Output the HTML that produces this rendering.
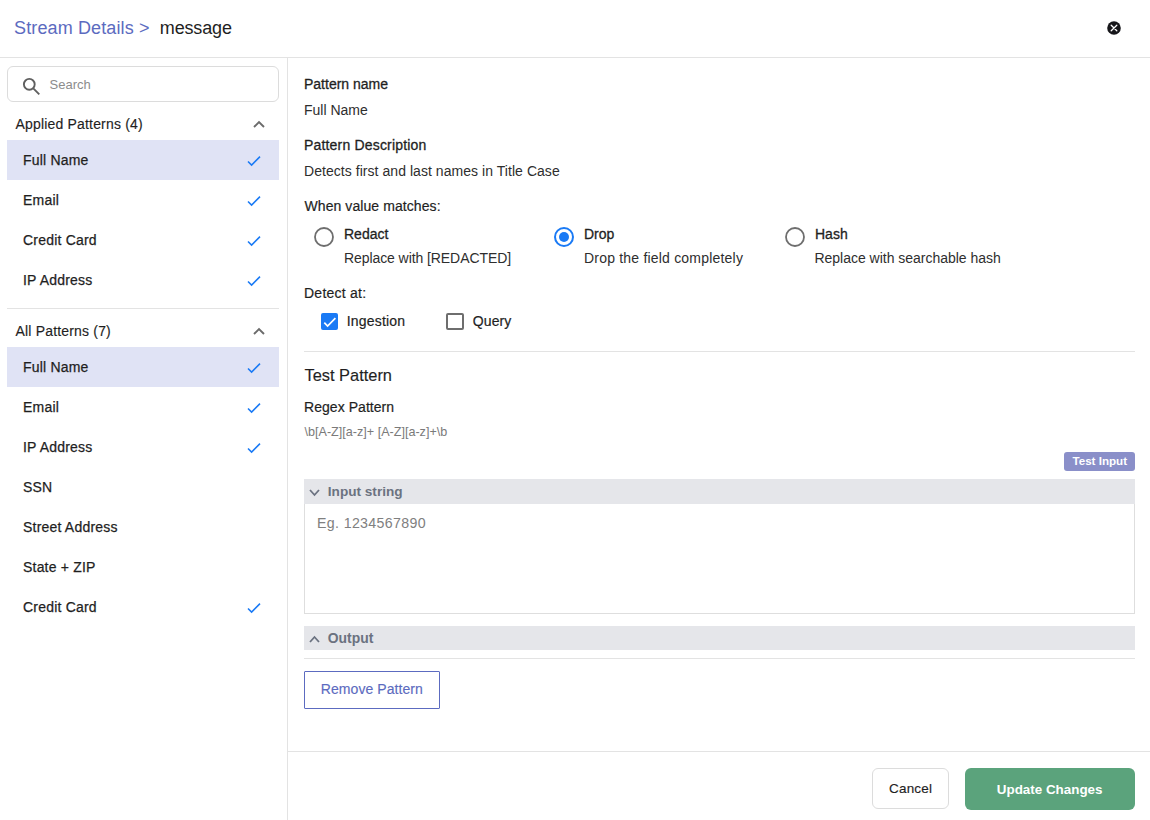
<!DOCTYPE html>
<html><head><meta charset="utf-8"><style>
html,body{margin:0;padding:0;background:#fff;width:1150px;height:820px;overflow:hidden;position:relative;font-family:"Liberation Sans", sans-serif;}
.t{position:absolute;white-space:pre;}
</style></head><body>
<div class="t" id="t0" style="left:14.00px;top:18.56px;font-size:18px;line-height:18px;font-weight:400;color:#5c6bc0;letter-spacing:0.13px;">Stream Details &gt;</div>
<div class="t" id="t1" style="left:159.80px;top:18.56px;font-size:18px;line-height:18px;font-weight:400;color:#1f1f1f;letter-spacing:-0.15px;">message</div>
<svg style="position:absolute;left:1106px;top:20px" width="16" height="16" viewBox="0 0 16 16"><circle cx="8" cy="8" r="6.8" fill="#16161a"/><path d="M5.2 5.2 L10.8 10.8 M10.8 5.2 L5.2 10.8" stroke="#fff" stroke-width="1.3" stroke-linecap="round"/></svg>
<div style="position:absolute;left:0px;top:57px;width:1150px;height:1px;background:#e3e3e3"></div>
<div style="position:absolute;left:287px;top:58px;width:1px;height:762px;background:#e3e3e3"></div>
<div style="position:absolute;left:288px;top:751px;width:862px;height:1px;background:#e3e3e3"></div>
<div style="position:absolute;left:7px;top:66px;width:272px;height:36px;box-sizing:border-box;border:1px solid #dcdcdc;border-radius:6px"></div>
<svg style="position:absolute;left:20px;top:75px" width="24" height="24" viewBox="0 0 24 24"><circle cx="9.3" cy="9.3" r="5.4" fill="none" stroke="#5f5f5f" stroke-width="1.9"/><path d="M13.3 13.3 L19.3 19.3" stroke="#5f5f5f" stroke-width="1.9" stroke-linecap="butt"/></svg>
<div class="t" id="t2" style="left:49.50px;top:77.89px;font-size:13px;line-height:13px;font-weight:400;color:#8c8c8c;">Search</div>
<div class="t" id="t3" style="left:15.50px;top:117.35px;font-size:14px;line-height:14px;font-weight:400;color:#1f1f1f;letter-spacing:0.18px;-webkit-text-stroke:0.15px #1f1f1f;">Applied Patterns (4)</div>
<svg style="position:absolute;left:252.0px;top:120.2px" width="14" height="9" viewBox="0 0 14 9"><path d="M2 7 L7.0 2 L12 7" fill="none" stroke="#6b6b6b" stroke-width="1.9"/></svg>
<div style="position:absolute;left:7px;top:140px;width:272px;height:40px;background:#e0e3f5"></div>
<div class="t" id="t4" style="left:23.00px;top:152.95px;font-size:14px;line-height:14px;font-weight:400;color:#1f1f1f;letter-spacing:0.2px;-webkit-text-stroke:0.25px #1f1f1f;">Full Name</div>
<svg style="position:absolute;left:247px;top:155px" width="14" height="12" viewBox="0 0 14 12"><path d="M1 6.5 L4.6 10.1 L13 1.6" fill="none" stroke="#1a7af5" stroke-width="1.55"/></svg>
<div class="t" id="t5" style="left:23.00px;top:192.95px;font-size:14px;line-height:14px;font-weight:400;color:#1f1f1f;letter-spacing:0.2px;-webkit-text-stroke:0.25px #1f1f1f;">Email</div>
<svg style="position:absolute;left:247px;top:195px" width="14" height="12" viewBox="0 0 14 12"><path d="M1 6.5 L4.6 10.1 L13 1.6" fill="none" stroke="#1a7af5" stroke-width="1.55"/></svg>
<div class="t" id="t6" style="left:23.00px;top:232.95px;font-size:14px;line-height:14px;font-weight:400;color:#1f1f1f;letter-spacing:0.2px;-webkit-text-stroke:0.25px #1f1f1f;">Credit Card</div>
<svg style="position:absolute;left:247px;top:235px" width="14" height="12" viewBox="0 0 14 12"><path d="M1 6.5 L4.6 10.1 L13 1.6" fill="none" stroke="#1a7af5" stroke-width="1.55"/></svg>
<div class="t" id="t7" style="left:23.00px;top:272.95px;font-size:14px;line-height:14px;font-weight:400;color:#1f1f1f;letter-spacing:0.2px;-webkit-text-stroke:0.25px #1f1f1f;">IP Address</div>
<svg style="position:absolute;left:247px;top:275px" width="14" height="12" viewBox="0 0 14 12"><path d="M1 6.5 L4.6 10.1 L13 1.6" fill="none" stroke="#1a7af5" stroke-width="1.55"/></svg>
<div style="position:absolute;left:7px;top:308px;width:272px;height:1px;background:#e3e3e3"></div>
<div class="t" id="t8" style="left:15.50px;top:324.05px;font-size:14px;line-height:14px;font-weight:400;color:#1f1f1f;letter-spacing:0.18px;-webkit-text-stroke:0.15px #1f1f1f;">All Patterns (7)</div>
<svg style="position:absolute;left:252.0px;top:327.2px" width="14" height="9" viewBox="0 0 14 9"><path d="M2 7 L7.0 2 L12 7" fill="none" stroke="#6b6b6b" stroke-width="1.9"/></svg>
<div style="position:absolute;left:7px;top:347px;width:272px;height:40px;background:#e0e3f5"></div>
<div class="t" id="t9" style="left:23.00px;top:359.95px;font-size:14px;line-height:14px;font-weight:400;color:#1f1f1f;letter-spacing:0.2px;-webkit-text-stroke:0.25px #1f1f1f;">Full Name</div>
<svg style="position:absolute;left:247px;top:362px" width="14" height="12" viewBox="0 0 14 12"><path d="M1 6.5 L4.6 10.1 L13 1.6" fill="none" stroke="#1a7af5" stroke-width="1.55"/></svg>
<div class="t" id="t10" style="left:23.00px;top:399.95px;font-size:14px;line-height:14px;font-weight:400;color:#1f1f1f;letter-spacing:0.2px;-webkit-text-stroke:0.25px #1f1f1f;">Email</div>
<svg style="position:absolute;left:247px;top:402px" width="14" height="12" viewBox="0 0 14 12"><path d="M1 6.5 L4.6 10.1 L13 1.6" fill="none" stroke="#1a7af5" stroke-width="1.55"/></svg>
<div class="t" id="t11" style="left:23.00px;top:439.95px;font-size:14px;line-height:14px;font-weight:400;color:#1f1f1f;letter-spacing:0.2px;-webkit-text-stroke:0.25px #1f1f1f;">IP Address</div>
<svg style="position:absolute;left:247px;top:442px" width="14" height="12" viewBox="0 0 14 12"><path d="M1 6.5 L4.6 10.1 L13 1.6" fill="none" stroke="#1a7af5" stroke-width="1.55"/></svg>
<div class="t" id="t12" style="left:23.00px;top:479.95px;font-size:14px;line-height:14px;font-weight:400;color:#1f1f1f;letter-spacing:0.2px;-webkit-text-stroke:0.25px #1f1f1f;">SSN</div>
<div class="t" id="t13" style="left:23.00px;top:519.95px;font-size:14px;line-height:14px;font-weight:400;color:#1f1f1f;letter-spacing:0.2px;-webkit-text-stroke:0.25px #1f1f1f;">Street Address</div>
<div class="t" id="t14" style="left:23.00px;top:559.95px;font-size:14px;line-height:14px;font-weight:400;color:#1f1f1f;letter-spacing:0.2px;-webkit-text-stroke:0.25px #1f1f1f;">State + ZIP</div>
<div class="t" id="t15" style="left:23.00px;top:599.95px;font-size:14px;line-height:14px;font-weight:400;color:#1f1f1f;letter-spacing:0.2px;-webkit-text-stroke:0.25px #1f1f1f;">Credit Card</div>
<svg style="position:absolute;left:247px;top:602px" width="14" height="12" viewBox="0 0 14 12"><path d="M1 6.5 L4.6 10.1 L13 1.6" fill="none" stroke="#1a7af5" stroke-width="1.55"/></svg>
<div class="t" id="t16" style="left:304.00px;top:77.15px;font-size:14px;line-height:14px;font-weight:400;color:#1f1f1f;-webkit-text-stroke:0.3px #1f1f1f;">Pattern name</div>
<div class="t" id="t17" style="left:304.00px;top:102.85px;font-size:14px;line-height:14px;font-weight:400;color:#2e2e2e;">Full Name</div>
<div class="t" id="t18" style="left:304.00px;top:138.25px;font-size:14px;line-height:14px;font-weight:400;color:#1f1f1f;letter-spacing:0.18px;-webkit-text-stroke:0.3px #1f1f1f;">Pattern Description</div>
<div class="t" id="t19" style="left:304.00px;top:164.15px;font-size:14px;line-height:14px;font-weight:400;color:#2e2e2e;letter-spacing:0.05px;">Detects first and last names in Title Case</div>
<div class="t" id="t20" style="left:304.50px;top:199.25px;font-size:14px;line-height:14px;font-weight:400;color:#1f1f1f;letter-spacing:0.08px;-webkit-text-stroke:0.2px #1f1f1f;">When value matches:</div>
<svg style="position:absolute;left:313px;top:226px" width="22" height="22" viewBox="0 0 22 22"><circle cx="11" cy="11" r="9" fill="none" stroke="#6e6e6e" stroke-width="1.8"/></svg>
<div class="t" id="t21" style="left:344.00px;top:227.45px;font-size:14px;line-height:14px;font-weight:400;color:#1f1f1f;-webkit-text-stroke:0.3px #1f1f1f;">Redact</div>
<div class="t" id="t22" style="left:344.00px;top:250.95px;font-size:14px;line-height:14px;font-weight:400;color:#2e2e2e;letter-spacing:-0.08px;">Replace with [REDACTED]</div>
<svg style="position:absolute;left:553px;top:226px" width="22" height="22" viewBox="0 0 22 22"><circle cx="11" cy="11" r="9" fill="none" stroke="#1a7af5" stroke-width="2"/><circle cx="11" cy="11" r="5" fill="#1a7af5"/></svg>
<div class="t" id="t23" style="left:584.00px;top:227.45px;font-size:14px;line-height:14px;font-weight:400;color:#1f1f1f;-webkit-text-stroke:0.3px #1f1f1f;">Drop</div>
<div class="t" id="t24" style="left:584.00px;top:250.95px;font-size:14px;line-height:14px;font-weight:400;color:#2e2e2e;letter-spacing:0.2px;">Drop the field completely</div>
<svg style="position:absolute;left:784px;top:226px" width="22" height="22" viewBox="0 0 22 22"><circle cx="11" cy="11" r="9" fill="none" stroke="#6e6e6e" stroke-width="1.8"/></svg>
<div class="t" id="t25" style="left:815.00px;top:227.45px;font-size:14px;line-height:14px;font-weight:400;color:#1f1f1f;-webkit-text-stroke:0.3px #1f1f1f;">Hash</div>
<div class="t" id="t26" style="left:814.50px;top:250.95px;font-size:14px;line-height:14px;font-weight:400;color:#2e2e2e;letter-spacing:-0.02px;">Replace with searchable hash</div>
<div class="t" id="t27" style="left:304.00px;top:286.15px;font-size:14px;line-height:14px;font-weight:400;color:#1f1f1f;letter-spacing:0.24px;-webkit-text-stroke:0.2px #1f1f1f;">Detect at:</div>
<div style="position:absolute;left:321px;top:313px;width:17px;height:17px;border-radius:2px;background:#1a7af5"></div>
<svg style="position:absolute;left:321px;top:313px" width="17" height="17" viewBox="0 0 17 17"><path d="M3.3 9.6 L6.6 13 L14.4 5.2" fill="none" stroke="#fff" stroke-width="1.7"/></svg>
<div class="t" id="t28" style="left:346.70px;top:314.05px;font-size:14px;line-height:14px;font-weight:400;color:#1f1f1f;letter-spacing:0.2px;-webkit-text-stroke:0.2px #1f1f1f;">Ingestion</div>
<div style="position:absolute;left:446px;top:313px;width:18px;height:17px;box-sizing:border-box;border:2px solid #6e6e6e;border-radius:2px"></div>
<div class="t" id="t29" style="left:472.80px;top:314.05px;font-size:14px;line-height:14px;font-weight:400;color:#1f1f1f;letter-spacing:0.1px;-webkit-text-stroke:0.2px #1f1f1f;">Query</div>
<div style="position:absolute;left:304px;top:351px;width:831px;height:1px;background:#e3e3e3"></div>
<div class="t" id="t30" style="left:304.50px;top:367.01px;font-size:16.4px;line-height:16.4px;font-weight:400;color:#1f1f1f;-webkit-text-stroke:0.15px #1f1f1f;">Test Pattern</div>
<div class="t" id="t31" style="left:304.00px;top:399.95px;font-size:14px;line-height:14px;font-weight:400;color:#1f1f1f;letter-spacing:0.05px;-webkit-text-stroke:0.2px #1f1f1f;">Regex Pattern</div>
<div class="t" id="t32" style="left:304.50px;top:425.73px;font-size:12.6px;line-height:12.6px;font-weight:400;color:#7a7a7a;">\b[A-Z][a-z]+ [A-Z][a-z]+\b</div>
<div style="position:absolute;left:1064px;top:452px;width:71px;height:19px;border-radius:3px;background:#8a8fc9"></div>
<div class="t" id="t33" style="left:1072.50px;top:455.38px;font-size:11.6px;line-height:11.6px;font-weight:700;color:#fff;">Test Input</div>
<div style="position:absolute;left:304px;top:479px;width:831px;height:25px;background:#e5e6ea"></div>
<svg style="position:absolute;left:307.7px;top:487.7px" width="13" height="9" viewBox="0 0 13 9"><path d="M2 2 L6.5 7 L11 2" fill="none" stroke="#6b7280" stroke-width="1.8"/></svg>
<div class="t" id="t34" style="left:327.80px;top:484.98px;font-size:13.6px;line-height:13.6px;font-weight:700;color:#6b7280;">Input string</div>
<div style="position:absolute;left:304px;top:504px;width:831px;height:110px;box-sizing:border-box;border:1px solid #dedede;border-top:none"></div>
<div class="t" id="t35" style="left:317.00px;top:515.78px;font-size:14.2px;line-height:14.2px;font-weight:400;color:#808080;letter-spacing:0.35px;">Eg. 1234567890</div>
<div style="position:absolute;left:304px;top:626px;width:831px;height:24px;background:#e5e6ea"></div>
<svg style="position:absolute;left:307.6px;top:634.6px" width="13" height="9" viewBox="0 0 13 9"><path d="M2 7 L6.5 2 L11 7" fill="none" stroke="#6b7280" stroke-width="1.8"/></svg>
<div class="t" id="t36" style="left:327.80px;top:632.23px;font-size:13.9px;line-height:13.9px;font-weight:700;color:#6b7280;">Output</div>
<div style="position:absolute;left:304px;top:658px;width:831px;height:1px;background:#e3e3e3"></div>
<div style="position:absolute;left:304px;top:671px;width:136px;height:38px;box-sizing:border-box;border:1.4px solid #5c6bc0;border-radius:1px"></div>
<div class="t" id="t37" style="left:320.80px;top:681.85px;font-size:14px;line-height:14px;font-weight:400;color:#5c6bc0;letter-spacing:0.07px;-webkit-text-stroke:0.15px #5c6bc0;">Remove Pattern</div>
<div style="position:absolute;left:872px;top:768px;width:77px;height:41px;box-sizing:border-box;border:1px solid #dcdcdc;border-radius:6px"></div>
<div class="t" id="t38" style="left:889.00px;top:782.47px;font-size:13.5px;line-height:13.5px;font-weight:400;color:#1f1f1f;letter-spacing:0.2px;-webkit-text-stroke:0.15px #1f1f1f;">Cancel</div>
<div style="position:absolute;left:965px;top:768px;width:170px;height:42px;border-radius:6px;background:#5ba37c"></div>
<div class="t" id="t39" style="left:996.80px;top:783.05px;font-size:13.4px;line-height:13.4px;font-weight:700;color:#fff;">Update Changes</div>
</body></html>
